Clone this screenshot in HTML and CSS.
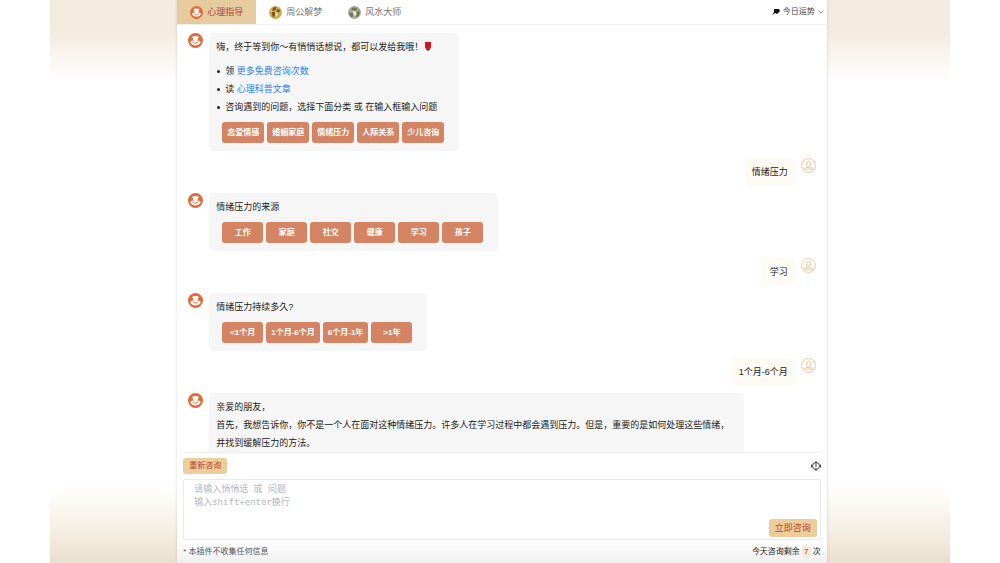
FILE: index.html
```html
<!DOCTYPE html>
<html lang="zh-CN">
<head>
    <meta charset="UTF-8">
    <meta name="viewport" content="width=device-width, initial-scale=1.0">
    <title>心理指导</title>
    <link rel="stylesheet" href="styles.css">
</head>
<body>
    <!-- shared icons -->
    <svg class="sprite" aria-hidden="true">
        <symbol id="bot" viewBox="0 0 16 16">
            <circle cx="8" cy="8" r="8" fill="#e26a38"/>
            <path d="M4.2 4.4 Q6 2.6 8 3.4 Q10 2.6 11.8 4.4 L10.8 5.4 Q11 7.4 9.2 8.4 H6.8 Q5 7.4 5.2 5.4 Z" fill="#fff"/>
            <path d="M2.4 9.6 Q4.2 7.6 6.4 8.2 H9.6 Q11.8 7.6 13.6 9.6 Q12.6 13 8 13.2 Q3.4 13 2.4 9.6 Z" fill="#fff"/>
            <path d="M5.4 9.6 Q8 12.4 10.6 9.6" fill="none" stroke="#e26a38"/>
        </symbol>
        <symbol id="user" viewBox="0 0 16 16">
            <g fill="none" stroke="#ebc597">
                <circle cx="8" cy="8" r="7.4"/>
                <circle cx="8" cy="6.2" r="2.4"/>
                <path d="M3 12.6 Q4 9.8 8 9.8 Q12 9.8 13 12.6 M3.4 11.8 H12.6"/>
            </g>
        </symbol>
    </svg>

    <div class="page">
        <main class="panel">
            <header class="header">
                <nav class="tabs">
                    <button class="tab active"><svg class="tab-icon"><use href="#bot"/></svg>心理指导</button>
                    <button class="tab">
                        <svg class="tab-icon" viewBox="0 0 16 16">
                            <circle cx="8" cy="8" r="8" fill="#d3a94f"/>
                            <path d="M5 2 L9 1 L8 5 L4 6 Z M10 4 L14 5 L12 8 L9 7 Z M3 8 L7 7 L8 11 L5 14 Z" fill="#765323"/>
                            <path d="M8 7 L11 9 L10 13 L8 12 Z M2 5 L4 6 L3 8 Z" fill="#f7e6b4"/>
                        </svg>周公解梦
                    </button>
                    <button class="tab">
                        <svg class="tab-icon" viewBox="0 0 16 16">
                            <circle cx="8" cy="8" r="8" fill="#a9aa94"/>
                            <path d="M4 3 Q8 0 12 4 L9 6 L5 5 Z M1 9 L6 8 L7 12 L4 14 Z" fill="#737663"/>
                            <path d="M6 6 L10 7 L11 11 L7 12 Z" fill="#eeeade"/>
                            <path d="M11 6 L15 7 L13 12 L10 14 Z" fill="#65764f"/>
                        </svg>风水大师
                    </button>
                </nav>
                <label class="fortune">
                    <svg class="fortune-icon" viewBox="0 0 8 8"><path d="M2 1 H7 L8 3 L6 5 L5 6 L3 5 L0 7 L2 4 Z" fill="#111"/></svg>
                    <select class="fortune-select" aria-label="今日运势"><option>今日运势</option></select>
                    <svg class="chevron" viewBox="0 0 6 4"><path d="M0.5 0.5 L3 3 L5.5 0.5" fill="none" stroke="#999"/></svg>
                </label>
            </header>

            <section class="chat">
                <div class="message">
                    <svg class="avatar"><use href="#bot"/></svg>
                    <div class="bubble">
                        <p>嗨，终于等到你～有悄悄话想说，都可以发给我哦！<svg class="rose" viewBox="0 0 8 10"><path d="M1 0 H7 V5 Q7 7 4 7 Q1 7 1 5 Z" fill="#d3121d"/><path d="M4 7 V9 M2 7 L4 8 L6 7" stroke="#4d3320" fill="none"/></svg></p>
                        <ul class="tips">
                            <li>领 <a href="#">更多免费咨询次数</a></li>
                            <li>读 <a href="#">心理科普文章</a></li>
                            <li>咨询遇到的问题，选择下面分类 或 在输入框输入问题</li>
                        </ul>
                        <div class="options">
                            <button class="option">恋爱情感</button>
                            <button class="option">婚姻家庭</button>
                            <button class="option">情绪压力</button>
                            <button class="option">人际关系</button>
                            <button class="option">少儿咨询</button>
                        </div>
                    </div>
                </div>

                <div class="message mine">
                    <div class="bubble">情绪压力</div>
                    <svg class="avatar"><use href="#user"/></svg>
                </div>

                <div class="message">
                    <svg class="avatar"><use href="#bot"/></svg>
                    <div class="bubble">
                        <p>情绪压力的来源</p>
                        <div class="options">
                            <button class="option">工作</button>
                            <button class="option">家庭</button>
                            <button class="option">社交</button>
                            <button class="option">健康</button>
                            <button class="option">学习</button>
                            <button class="option">孩子</button>
                        </div>
                    </div>
                </div>

                <div class="message mine">
                    <div class="bubble">学习</div>
                    <svg class="avatar"><use href="#user"/></svg>
                </div>

                <div class="message">
                    <svg class="avatar"><use href="#bot"/></svg>
                    <div class="bubble">
                        <p>情绪压力持续多久?</p>
                        <div class="options">
                            <button class="option">&lt;1个月</button>
                            <button class="option">1个月-6个月</button>
                            <button class="option">6个月-1年</button>
                            <button class="option">&gt;1年</button>
                        </div>
                    </div>
                </div>

                <div class="message mine">
                    <div class="bubble">1个月-6个月</div>
                    <svg class="avatar"><use href="#user"/></svg>
                </div>

                <div class="message">
                    <svg class="avatar"><use href="#bot"/></svg>
                    <div class="bubble">
                        <p>亲爱的朋友，</p>
                        <p>首先，我想告诉你，你不是一个人在面对这种情绪压力。许多人在学习过程中都会遇到压力。但是，重要的是如何处理这些情绪，<br>并找到缓解压力的方法。</p>
                    </div>
                </div>
            </section>

            <form class="composer">
                <div class="toolbar">
                    <button type="button" class="action">重新咨询</button>
                    <button type="button" class="settings" aria-label="设置">
                        <svg viewBox="0 0 10 10"><g fill="none" stroke="#444"><circle cx="5" cy="5" r="3.5"/><path d="M5 0 V6 M5 7 V10 M0.5 3.5 V6.5 M9.5 3.5 V6.5"/></g></svg>
                    </button>
                </div>
                <div class="input-box">
                    <textarea aria-label="咨询内容" placeholder="请输入悄悄话 或 问题&#10;输入shift+enter换行"></textarea>
                    <button type="button" class="action submit">立即咨询</button>
                </div>
            </form>

            <footer class="footer">
                <span class="note">* 本插件不收集任何信息</span>
                <span>今天咨询剩余 <b class="count">7</b> 次</span>
            </footer>
        </main>
    </div>
</body>
</html>
```

FILE: styles.css
```css
* {
    box-sizing: border-box;
}
body {
    margin: 0;
    background: white;
    color: #222;
    font-family: "Liberation Sans", "Noto Sans CJK SC", sans-serif;
    font-size: 9px;
    line-height: 18px;
}
button, select, textarea {
    font: inherit;
    color: inherit;
    border: none;
    margin: 0;
    padding: 0;
}
button {
    cursor: pointer;
}
p {
    margin: 0;
}
a {
    color: #2f80f5;
    text-decoration: none;
}
.sprite {
    display: none;
}
.page {
    display: flex;
    justify-content: center;
    width: 90%;
    height: 100vh;
    margin: 0 auto;
    padding-left: 4px;
    background:
        linear-gradient(#f4ebdf 0, #f4ebdf 30px, rgba(255,255,255,0) 82px),
        linear-gradient(to top, #e9dfcf 0, #f3eadd 22px, #f7f2e8 42px, rgba(255,255,255,0) 76px);
}
.panel {
    display: flex;
    flex-direction: column;
    width: 72.5%;
    min-width: 0;
    background: white;
    box-shadow: 0 0 3px rgba(0,0,0,0.15);
}

/* header */
.header {
    display: flex;
    justify-content: space-between;
    flex-shrink: 0;
    border-bottom: 1px solid #f0f0f0;
}
.tabs {
    display: flex;
}
.tab {
    display: flex;
    align-items: center;
    gap: 4px;
    height: 24px;
    padding: 0 13px;
    background: none;
    color: #777;
}
.tab.active {
    background-color: #e6cb9f;
    color: #b8432f;
}
.tab-icon {
    width: 13px;
    height: 13px;
}
.fortune {
    display: flex;
    align-items: center;
    gap: 3px;
    padding-right: 3px;
    font-size: 8px;
}
.fortune-icon {
    width: 8px;
    height: 8px;
}
.fortune-select {
    appearance: none;
    background: none;
    color: #444;
}
.chevron {
    width: 6px;
    height: 4px;
}

/* chat */
.chat {
    display: flex;
    flex-direction: column;
    flex: 1;
    gap: 7px;
    min-height: 0;
    margin: 0 6px;
    padding: 8px 5px 0;
    overflow: hidden;
    border-bottom: 1px solid #f0f0f0;
}
.message {
    display: flex;
    flex-shrink: 0;
    align-items: flex-start;
    gap: 6px;
}
.message.mine {
    justify-content: flex-end;
}
.avatar {
    flex-shrink: 0;
    width: 15px;
    height: 15px;
}
.bubble {
    padding: 5px 15px 8px 7px;
    border-radius: 5px;
    background-color: #f6f6f6;
}
.mine .bubble {
    padding: 5px 7px;
    background-color: #fdfbf4;
}
.rose {
    width: 8px;
    height: 10px;
    margin-left: 1px;
    vertical-align: -2px;
}
.tips {
    margin: 6px 0 0;
    padding: 0 0 0 9px;
    list-style: none;
}
.tips li::before {
    content: "";
    float: left;
    width: 3px;
    height: 3px;
    margin: 8px 0 0 -8px;
    border-radius: 50%;
    background-color: #222;
}
.options {
    display: flex;
    gap: 3px;
    padding: 6px 0 0 6px;
}
.option {
    min-width: 41px;
    height: 21px;
    padding: 0 5px;
    border-radius: 3px;
    background-color: #d58463;
    color: white;
    font-size: 8px;
    font-weight: bold;
    white-space: nowrap;
}

/* composer */
.composer {
    flex-shrink: 0;
    padding: 5px 6px 1px;
}
.toolbar {
    display: flex;
    align-items: center;
    justify-content: space-between;
    margin-bottom: 5px;
}
.action {
    height: 16px;
    padding: 0 6px;
    border-radius: 3px;
    background-color: #edcd9c;
    color: #b8432f;
    font-size: 8px;
    line-height: 16px;
}
.settings {
    display: flex;
    background: none;
}
.settings svg {
    width: 10px;
    height: 10px;
}
.input-box {
    position: relative;
}
textarea {
    display: block;
    width: 100%;
    height: 61px;
    padding: 3px 10px;
    border: 1px solid #e8eaee;
    border-radius: 2px;
    resize: none;
    font-family: "DejaVu Sans Mono", "Noto Sans CJK SC", monospace;
    line-height: 13px;
}
textarea::placeholder {
    color: #b4b7c0;
}
.submit {
    position: absolute;
    right: 4px;
    bottom: 3px;
    height: 18px;
    font-size: 9px;
}
.footer {
    display: flex;
    align-items: center;
    justify-content: space-between;
    flex-shrink: 0;
    height: 22px;
    padding: 0 6px;
    background: linear-gradient(white, #efefef);
    font-size: 8px;
}
.note {
    color: #555;
}
.count {
    padding: 2px;
    border-radius: 4px;
    background-color: #f6ead8;
    color: #79502c;
    font-weight: normal;
}
```
